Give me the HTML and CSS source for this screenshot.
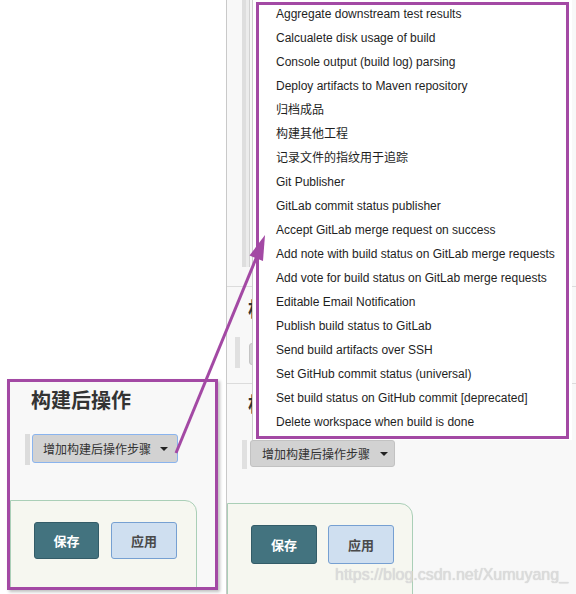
FILE: index.html
```html
<!DOCTYPE html>
<html lang="zh">
<head>
<meta charset="utf-8">
<title>构建后操作</title>
<link rel="stylesheet" href="styles.css">
</head>
<body>
<div class="canvas">
  <div class="blank"></div>
  <div class="page">
    <div class="top">
      <div class="rail"><span class="rail-a"></span><span class="rail-b"></span><span class="rail-c"></span></div>
    </div>
    <div class="sep"></div>
    <div class="sec1">
      <div class="heading">构建</div>
      <div class="row1">
        <span class="stripe1"></span>
        <span class="btn-mini">增加构建步骤</span>
      </div>
    </div>
    <div class="sep"></div>
    <div class="sec2">
      <div class="heading">构建后操作</div>
      <div class="row2">
        <span class="stripe2"></span>
        <span class="add-btn">增加构建后操作步骤<i class="caret"></i></span>
      </div>
      <div class="footer">
        <div class="btns">
          <span class="btn-save">保存</span>
          <span class="btn-apply">应用</span>
        </div>
      </div>
    </div>

    <ul class="menu">
      <li>Aggregate downstream test results</li>
      <li>Calcualete disk usage of build</li>
      <li>Console output (build log) parsing</li>
      <li>Deploy artifacts to Maven repository</li>
      <li>归档成品</li>
      <li>构建其他工程</li>
      <li>记录文件的指纹用于追踪</li>
      <li>Git Publisher</li>
      <li>GitLab commit status publisher</li>
      <li>Accept GitLab merge request on success</li>
      <li>Add note with build status on GitLab merge requests</li>
      <li>Add vote for build status on GitLab merge requests</li>
      <li>Editable Email Notification</li>
      <li>Publish build status to GitLab</li>
      <li>Send build artifacts over SSH</li>
      <li>Set GitHub commit status (universal)</li>
      <li>Set build status on GitHub commit [deprecated]</li>
      <li>Delete workspace when build is done</li>
    </ul>
  </div>

  <div class="inset">
    <div class="inset-heading">构建后操作</div>
    <div class="inset-row">
      <span class="inset-stripe"></span>
      <span class="inset-btn">增加构建后操作步骤<i class="caret"></i></span>
    </div>
    <div class="inset-footer">
      <div class="inset-btns">
        <span class="ibtn-save">保存</span>
        <span class="ibtn-apply">应用</span>
      </div>
    </div>
  </div>

  <div class="callout"></div>

  <svg class="arrow" width="576" height="594" viewBox="0 0 576 594">
    <line x1="176" y1="453" x2="257" y2="256" stroke="#a349a4" stroke-width="3"/>
    <polygon points="265,235 263,261 249.5,255.6" fill="#a349a4"/>
  </svg>

  <div class="watermark">https://blog.csdn.net/Xumuyang_</div>
</div>
</body>
</html>
```
FILE: styles.css
```css
* { box-sizing: border-box; }
body {
  margin: 0;
  font-family: "Liberation Sans", "Noto Sans CJK SC", sans-serif;
  background: #fff;
}
.canvas {
  position: relative;
  width: 576px;
  height: 594px;
  overflow: hidden;
  display: flex;
  background: #fff;
}
.blank { width: 226px; flex: none; background: #fff; }
.page {
  flex: 1;
  position: relative;
  border-left: 1px solid #c9c9c9;
  background: #f8f8f8;
}
.top { height: 286px; padding-left: 15px; }
.rail { display: flex; height: 267px; }
.rail-a { width: 4px; background: #dedede; }
.rail-b { width: 3px; background: #ececec; }
.rail-c { width: 1px; background: #d2d2d2; }
.sep { border-top: 1px solid #dcdcdc; }

.heading {
  width: 25px;
  overflow: hidden;
  white-space: nowrap;
  font: bold 20px/24px "Noto Sans CJK SC", sans-serif;
  color: #333;
  padding-left: 21px;
}
.sec1 { height: 96px; padding-top: 10px; }
.row1 { display: flex; margin-top: 16px; height: 31px; }
.stripe1 { width: 5px; margin-left: 8px; background: #e0e0e0; }
.btn-mini {
  margin: 6px 0 0 9px;
  width: 10px;
  height: 22px;
  overflow: hidden;
  white-space: nowrap;
  text-indent: 12px;
  background: #d6d6d6;
  border: 1px solid #c4c4c4;
  border-radius: 3px;
  font: 12px/20px "Noto Sans CJK SC", sans-serif;
  color: #333;
}

.sec2 { padding-top: 8px; }
.row2 { display: flex; margin-top: 24px; height: 29px; }
.stripe2 { width: 5px; margin-left: 15px; background: #e0e0e0; }
.add-btn {
  display: flex;
  align-items: center;
  margin-left: 3px;
  width: 145px;
  height: 27px;
  padding-left: 11px;
  background: #d2d2d2;
  border: 1px solid #c2c2c2;
  border-radius: 3px;
  font: 12px/1 "Noto Sans CJK SC", sans-serif;
  color: #333;
}
.caret {
  display: inline-block;
  width: 0;
  height: 0;
  margin-left: 10px;
  border-left: 4px solid transparent;
  border-right: 4px solid transparent;
  border-top: 4px solid #222;
}
.footer {
  margin-top: 34px;
  width: 186px;
  height: 100px;
  background: #f6f7f0;
  border: 1px solid #aacfb7;
  border-top-right-radius: 13px;
  padding: 21px 0 0 23px;
}
.btns { display: flex; gap: 11px; }
.btn-save, .btn-apply, .ibtn-save, .ibtn-apply {
  display: flex;
  align-items: center;
  justify-content: center;
  border-radius: 3px;
  font: bold 13px/1 "Noto Sans CJK SC", sans-serif;
}
.btn-save { width: 66px; height: 39px; background: #43737f; border: 1px solid #335c68; color: #fff; }
.btn-apply { width: 66px; height: 39px; background: #cfdff0; border: 1px solid #76a0d2; color: #4a4a4a; }

.menu {
  position: absolute;
  left: 25px;
  top: 0;
  width: 320px;
  height: 440px;
  margin: 0;
  padding: 2px 0 0 23px;
  list-style: none;
  background: #fff;
  border-left: 1px solid #cfcfcf;
  font-size: 12px;
  line-height: 24px;
  color: #1e1e1e;
  white-space: nowrap;
}

.inset {
  position: absolute;
  left: 7px;
  top: 379px;
  width: 211px;
  height: 211px;
  border: 3px solid #a349a4;
  background: #f8f8f8;
  overflow: hidden;
  box-shadow: 2px 2px 3px rgba(0, 0, 0, 0.25);
  padding-top: 6px;
}
.inset-heading {
  font: bold 20px/24px "Noto Sans CJK SC", sans-serif;
  color: #333;
  padding-left: 21px;
}
.inset-row { display: flex; margin-top: 22px; height: 31px; }
.inset-stripe { width: 5px; margin-left: 15px; background: #dcdcdc; }
.inset-btn {
  display: flex;
  align-items: center;
  margin-left: 2px;
  width: 146px;
  height: 29px;
  padding-left: 10px;
  background: #d2d2d2;
  border: 1px solid #8ab4ee;
  border-radius: 3px;
  font: 12px/1 "Noto Sans CJK SC", sans-serif;
  color: #333;
}
.inset-btn .caret { margin-left: 9px; }
.inset-footer {
  margin-top: 35px;
  width: 187px;
  height: 100px;
  background: #f6f7f0;
  border: 1px solid #aacfb7;
  border-top-right-radius: 12px;
  padding: 21px 0 0 23px;
}
.inset-btns { display: flex; gap: 12px; }
.ibtn-save { width: 65px; height: 37px; background: #43737f; border: 1px solid #335c68; color: #fff; }
.ibtn-apply { width: 66px; height: 37px; background: #cfdff0; border: 1px solid #76a0d2; color: #4a4a4a; }

.callout {
  position: absolute;
  left: 256px;
  top: 2px;
  width: 313px;
  height: 437px;
  border: 3px solid #a349a4;
}
.arrow { position: absolute; left: 0; top: 0; pointer-events: none; }
.watermark {
  position: absolute;
  left: 335px;
  top: 565px;
  font-size: 16px;
  line-height: 20px;
  color: #dcdcdc;
  text-shadow: 0 0 1px #c8c8c8;
}
```
